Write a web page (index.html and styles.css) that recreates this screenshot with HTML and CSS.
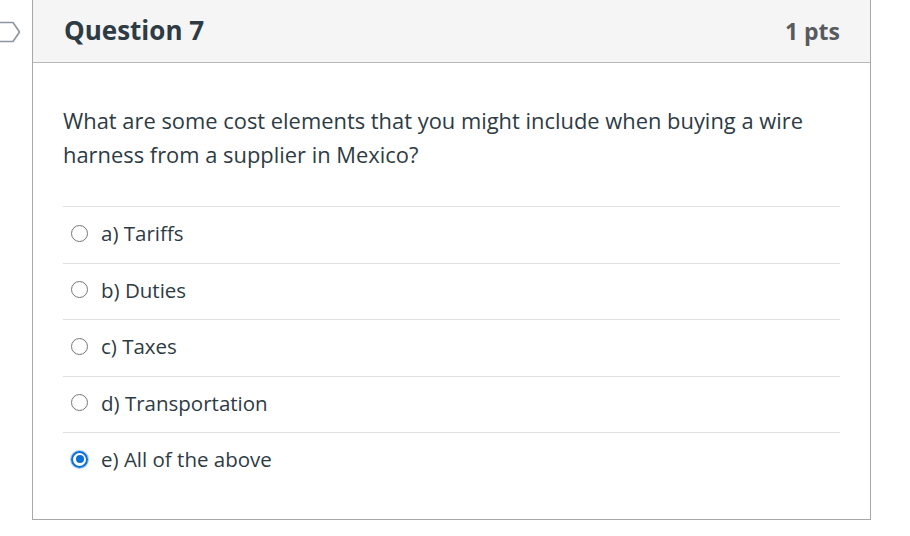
FILE: index.html
```html
<!DOCTYPE html>
<html>
<head>
<meta charset="utf-8">
<link rel="stylesheet" href="styles.css">
</head>
<body>
<div class="page">
  <div class="flag-col">
    <svg class="flag" width="22" height="22" viewBox="0 0 22 22">
      <path d="M-4 1.5 H13 L19.5 11 L13 20.5 H-4 Z" fill="none" stroke="#8b959e" stroke-width="1.6" stroke-linejoin="round"/>
    </svg>
  </div>
  <div class="card">
    <div class="card-header">
      <h2 class="title">Question 7</h2>
      <div class="pts">1 pts</div>
    </div>
    <div class="card-body">
      <p class="question">What are some cost elements that you might include when buying a wire harness from a supplier in Mexico?</p>
      <div class="answers">
        <label class="answer"><span class="radio"></span><span class="answer-text">a) Tariffs</span></label>
        <label class="answer"><span class="radio"></span><span class="answer-text">b) Duties</span></label>
        <label class="answer"><span class="radio"></span><span class="answer-text">c) Taxes</span></label>
        <label class="answer"><span class="radio"></span><span class="answer-text">d) Transportation</span></label>
        <label class="answer"><span class="radio checked"></span><span class="answer-text">e) All of the above</span></label>
      </div>
    </div>
  </div>
</div>
</body>
</html>
```

FILE: styles.css
```css
html, body {
  margin: 0;
  padding: 0;
  background: #ffffff;
  font-family: "Open Sans", "Liberation Sans", sans-serif;
  color: #2d3b45;
}
.page {
  display: flex;
  align-items: flex-start;
}
.flag-col {
  width: 32px;
  padding-top: 21px;
}
.flag {
  display: block;
}
.card {
  width: 837px;
  border: 1px solid #a8a8a8;
  border-top: none;
  background: #fff;
}
.card-header {
  height: 63px;
  background: #f5f5f5;
  border-bottom: 1px solid #b8b8b8;
  display: flex;
  align-items: center;
  justify-content: space-between;
  padding: 0 30px 0 31px;
  box-sizing: border-box;
}
.title {
  margin: 0;
  font-size: 26px;
  font-weight: 700;
  color: #2d3b45;
  padding-bottom: 3px;
}
.pts {
  font-size: 23px;
  font-weight: 700;
  color: #585b5e;
}
.card-body {
  padding: 41px 30px 30px 30px;
}
.question {
  margin: 0;
  font-size: 21.9px;
  line-height: 34px;
  color: #2d3b45;
}
.answers {
  margin-top: 34px;
}
.answer {
  display: flex;
  align-items: flex-start;
  height: 56.5px;
  box-sizing: border-box;
  border-top: 1px solid #e2e2e2;
  padding: 12px 0 0 8px;
  gap: 13px;
}
.radio {
  width: 17px;
  height: 17px;
  margin-top: 5.5px;
  border: 1.5px solid #767676;
  border-radius: 50%;
  box-sizing: border-box;
  position: relative;
}
.radio.checked {
  border: 2px solid #0b6fd8;
  box-shadow: 0 0 0 1px #a9cbf0;
}
.radio.checked::after {
  content: "";
  position: absolute;
  left: 2.5px;
  top: 2.5px;
  width: 8px;
  height: 8px;
  border-radius: 50%;
  background: #0b6fd8;
}
.answer-text {
  font-size: 20.5px;
  line-height: 28px;
  color: #2d3b45;
}
```
